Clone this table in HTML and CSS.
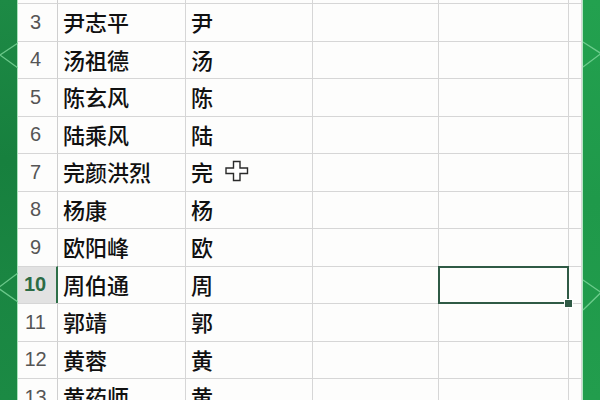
FILE: index.html
```html
<!DOCTYPE html>
<html lang="zh">
<head>
<meta charset="utf-8">
<title>Sheet</title>
<link rel="stylesheet" href="styles.css">
</head>
<body>
<div class="app">
  <div class="edge edge-left">
    <svg class="deco" width="18" height="400" viewBox="0 0 18 400">
      <polyline points="18,43 0,55 18,68" />
      <polyline points="18,273 -2,288 18,302" />
    </svg>
  </div>
  <div class="sheet">
    <div class="stub rh"></div><div class="stub c"></div><div class="stub c"></div><div class="stub c"></div><div class="stub c"></div><div class="stub c"></div>

    <div class="rh">3</div><div class="c">尹志平</div><div class="c">尹</div><div class="c"></div><div class="c"></div><div class="c"></div>
    <div class="rh">4</div><div class="c">汤祖德</div><div class="c">汤</div><div class="c"></div><div class="c"></div><div class="c"></div>
    <div class="rh">5</div><div class="c">陈玄风</div><div class="c">陈</div><div class="c"></div><div class="c"></div><div class="c"></div>
    <div class="rh">6</div><div class="c">陆乘风</div><div class="c">陆</div><div class="c"></div><div class="c"></div><div class="c"></div>
    <div class="rh">7</div><div class="c">完颜洪烈</div><div class="c has-cursor">完<svg class="cursor" width="24" height="22" viewBox="0 0 24 22"><path d="M8.5 1.5h6.5v6.5h7.5v5.5h-7.5v7h-6.5v-7h-7.5v-5.5h7.5z" /></svg></div><div class="c"></div><div class="c"></div><div class="c"></div>
    <div class="rh">8</div><div class="c">杨康</div><div class="c">杨</div><div class="c"></div><div class="c"></div><div class="c"></div>
    <div class="rh">9</div><div class="c">欧阳峰</div><div class="c">欧</div><div class="c"></div><div class="c"></div><div class="c"></div>
    <div class="rh active">10</div><div class="c">周伯通</div><div class="c">周</div><div class="c"></div><div class="c selected"></div><div class="c"></div>
    <div class="rh">11</div><div class="c">郭靖</div><div class="c">郭</div><div class="c"></div><div class="c"></div><div class="c"></div>
    <div class="rh">12</div><div class="c">黄蓉</div><div class="c">黄</div><div class="c"></div><div class="c"></div><div class="c"></div>
    <div class="rh">13</div><div class="c">黄药师</div><div class="c">黄</div><div class="c"></div><div class="c"></div><div class="c"></div>
  </div>
  <div class="edge edge-right">
    <svg class="deco" width="18" height="400" viewBox="0 0 18 400">
      <polyline points="0,42 18,53.5 0,67" />
      <polyline points="0,280 18,292.5 0,310" />
    </svg>
  </div>
</div>
</body>
</html>
```

FILE: styles.css
```css
* { box-sizing: border-box; }
html, body { margin: 0; padding: 0; }
body {
  width: 600px;
  height: 400px;
  overflow: hidden;
  background: #fdfdfc;
  font-family: "Noto Sans CJK SC", "Noto Sans", sans-serif;
}
.app {
  display: flex;
  width: 600px;
  height: 400px;
}
.edge {
  width: 18px;
  flex: none;
  height: 400px;
}
.edge-left {
  background: linear-gradient(180deg, #1d8a45 0%, #17803e 40%, #1a8642 70%, #1b8a44 100%);
  border-right: 1px solid #a9e2bb;
}
.edge-right {
  background: linear-gradient(180deg, #23a14f 0%, #1f994a 50%, #229d4d 100%);
  border-left: 1px solid #b4e8c4;
}
.deco { display: block; overflow: visible; }
.deco polyline {
  fill: none;
  stroke: #79d497;
  stroke-width: 1.3;
  opacity: 0.85;
}
.sheet {
  flex: 1;
  display: grid;
  grid-template-columns: 40px 128px 127px 126px 130px 1fr;
  grid-template-rows: 3px;
  grid-auto-rows: 37.5px;
  background: #fdfdfc;
  overflow: hidden;
}
.rh, .c {
  border-right: 1px solid #d6d6d6;
  border-top: 1px solid #d6d6d6;
  display: flex;
  align-items: center;
}
.stub { border-top: none; }
.rh {
  justify-content: center;
  padding-right: 4px;
  font-family: "Liberation Sans", "Noto Sans", sans-serif;
  font-size: 20px;
  color: #555555;
  border-right-color: #cfcfcf;
}
.rh.active {
  background: #e2e2e2;
  color: #2c6b45;
  font-weight: bold;
  border-right: 2px solid #2e6f48;
}
.c {
  padding-left: 5px;
  padding-bottom: 2px;
  font-size: 22px;
  font-weight: 500;
  color: #111111;
  white-space: nowrap;
}
.has-cursor { position: relative; }
.cursor {
  position: absolute;
  left: 39px;
  top: 6px;
}
.cursor path {
  fill: #ffffff;
  stroke: #2a2a2a;
  stroke-width: 1.4;
  stroke-linejoin: miter;
}
.selected { position: relative; }
.selected::before {
  content: "";
  position: absolute;
  left: -1px;
  top: -1px;
  right: -1px;
  bottom: -1px;
  border: 2px solid #2f5a45;
}
.selected::after {
  content: "";
  position: absolute;
  right: -5px;
  bottom: -5px;
  width: 7px;
  height: 7px;
  background: #2f5a45;
  border: 1px solid #ffffff;
}
```
